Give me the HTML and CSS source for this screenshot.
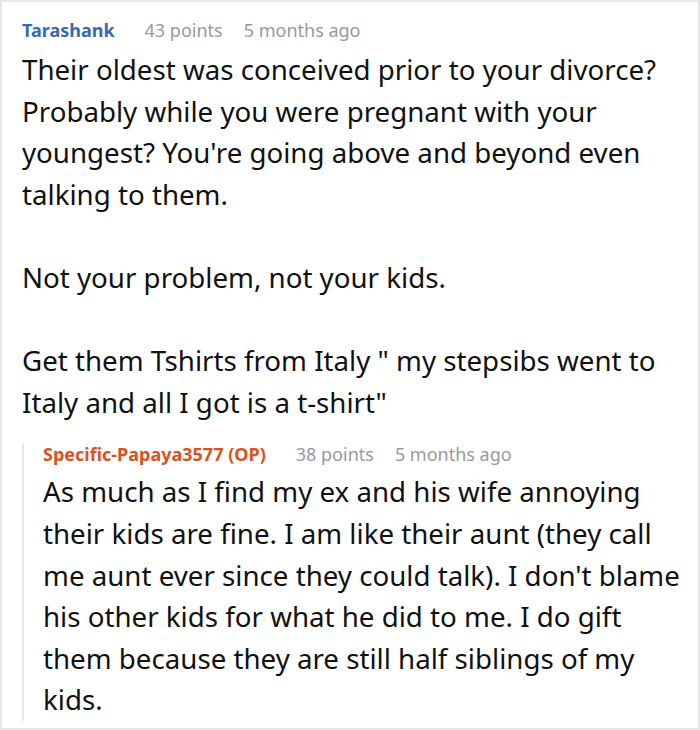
FILE: index.html
```html
<!DOCTYPE html>
<html>
<head>
<meta charset="utf-8">
<link rel="stylesheet" href="styles.css">
</head>
<body>
<div class="frame">
  <div class="comment">
    <div class="meta">
      <span class="author">Tarashank</span>
      <span class="info">43 points</span>
      <span class="info">5 months ago</span>
    </div>
    <div class="body">
      <p>Their oldest was conceived prior to your divorce? Probably while you were pregnant with your youngest? You're going above and beyond even talking to them.</p>
      <p>Not your problem, not your kids.</p>
      <p>Get them Tshirts from Italy " my stepsibs went to Italy and all I got is a t-shirt"</p>
    </div>
    <div class="reply">
      <div class="meta">
        <span class="author op">Specific-Papaya3577 (OP)</span>
        <span class="info">38 points</span>
        <span class="info">5 months ago</span>
      </div>
      <div class="body">
        <p>As much as I find my ex and his wife annoying their kids are fine. I am like their aunt (they call me aunt ever since they could talk). I don't blame his other kids for what he did to me. I do gift them because they are still half siblings of my kids.</p>
      </div>
    </div>
  </div>
</div>
</body>
</html>
```
FILE: styles.css
```css
html, body {
  margin: 0;
  padding: 0;
  background: #fff;
}
.frame {
  width: 700px;
  height: 730px;
  box-sizing: border-box;
  border: 2px solid #e6e6e6;
  overflow: hidden;
  font-family: "Noto Sans", "Open Sans", sans-serif;
}
.comment {
  padding: 13px 14px 0 20px;
}
.meta {
  display: flex;
  gap: 21px;
  font-size: 18px;
  line-height: 30px;
}
.author {
  font-weight: bold;
  color: #3a68b3;
  margin-right: 9px;
}
.author.op {
  color: #d9531e;
}
.info {
  color: #999;
}
.body {
  font-size: 27.7px;
  line-height: 41.6px;
  color: #111;
  margin-top: 4px;
}
.body p {
  margin: 0 0 41.6px 0;
}
.body p:last-child {
  margin-bottom: 0;
}
.reply {
  margin-top: 20px;
  border-left: 2px solid #e6e6e6;
  padding-left: 19px;
}
.reply .meta {
  line-height: 22px;
}
.reply .body {
  margin-top: 6px;
  margin-bottom: -12px;
}
```
